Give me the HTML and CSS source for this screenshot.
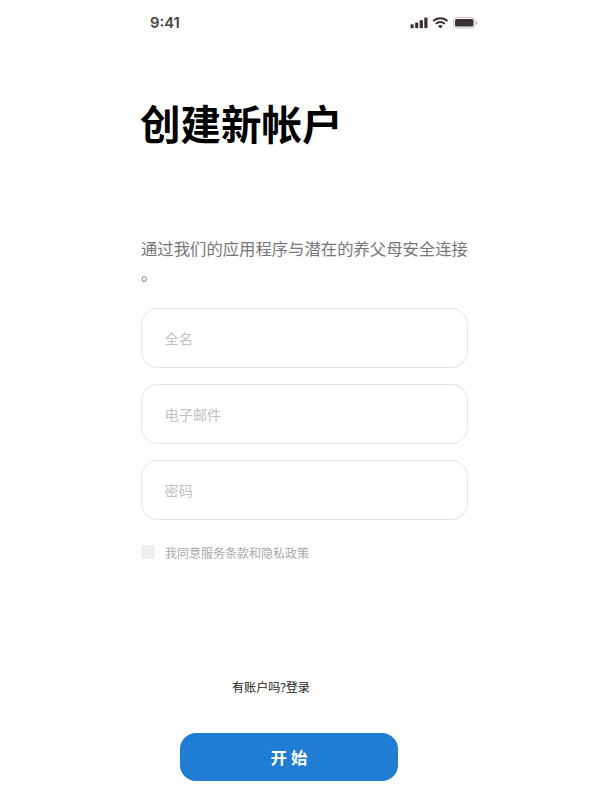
FILE: index.html
```html
<!DOCTYPE html>
<html lang="zh-CN">
<head>
<meta charset="utf-8">
<title>创建新帐户</title>
<link rel="stylesheet" href="styles.css">
</head>
<body>
<main class="screen">
  <header class="status">
    <span class="time">9:41</span>
    <svg class="indicators" width="68" height="14" viewBox="0 0 68 14" fill="#3d3034">
      <rect x="0.5" y="8.2" width="3.2" height="4" rx="1"/>
      <rect x="5.1" y="6.4" width="3.2" height="5.8" rx="1"/>
      <rect x="9.7" y="4" width="3.2" height="8.2" rx="1"/>
      <rect x="14.3" y="1.5" width="3.2" height="10.7" rx="1"/>
      <g fill="none" stroke="#3d3034" stroke-width="2">
        <path d="M23.2 5.1a10.2 10.2 0 0 1 14.2 0"/>
        <path d="M25.8 7.9a6.5 6.5 0 0 1 9 0"/>
      </g>
      <path d="M27.9 10a3.6 3.6 0 0 1 4.8 0L30.3 12.4z"/>
      <rect x="43.5" y="1.5" width="21.5" height="10.5" rx="3" fill="none" stroke="#c4c0c1"/>
      <rect x="45" y="3" width="18.5" height="7.5" rx="1.5"/>
      <path d="M66 5v4c1.3-.7 1.3-3.3 0-4" fill="#a9a4a6"/>
    </svg>
  </header>
  <h1 class="title">创建新帐户</h1>
  <p class="intro">通过我们的应用程序与潜在的养父母安全连接。</p>
  <form class="form">
    <input class="field" type="text" placeholder="全名">
    <input class="field" type="email" placeholder="电子邮件">
    <input class="field" type="password" placeholder="密码">
    <label class="terms"><input class="check" type="checkbox"><span class="terms-text">我同意服务条款和隐私政策</span></label>
    <p class="login">有账户吗?<a class="login-link">登录</a></p>
    <button class="start" type="button">开 始</button>
  </form>
</main>
</body>
</html>
```

FILE: styles.css
```css
* { box-sizing: border-box; }
body {
  margin: 0;
  background: #fff;
  font-family: "Noto Sans", "Noto Sans CJK SC", sans-serif;
}
.screen { width: 327px; height: 812px; margin: 0 auto; }
.status {
  display: flex;
  justify-content: space-between;
  align-items: center;
  height: 46px;
  margin-right: -10px;
  padding-left: 9px;
}
.time { font: 600 14.8px/20px Inter, sans-serif; color: #4a4144; }
.title {
  margin: 49px 0 0 -1px;
  font-size: 40.5px;
  line-height: 60px;
  font-weight: 700;
  color: #000;
  white-space: nowrap;
}
.intro {
  margin: 82px 0 0;
  font-size: 16.35px;
  line-height: 25px;
  color: #777;
  line-break: anywhere;
}
.form { display: flex; flex-direction: column; margin-top: 21px; }
.field {
  height: 60px;
  margin-bottom: 16px;
  padding: 0 22.5px;
  border: 1px solid #e4e4e4;
  border-radius: 16px;
  outline: none;
  background: #fff;
  font: 14.2px "Noto Sans", "Noto Sans CJK SC", sans-serif;
}
.field::placeholder { color: #c0c0c0; }
.terms {
  display: flex;
  align-items: center;
  gap: 10px;
  margin-top: 6px;
  height: 20px;
  font-size: 12px;
  color: #a8a8a8;
}
.terms-text { padding-top: 2px; }
.check {
  appearance: none;
  width: 14px;
  height: 14px;
  margin: 0;
  border-radius: 4px;
  background: #efefef;
}
.login {
  margin: 116px 0 0 91px;
  font-size: 12.1px;
  line-height: 20px;
  color: #222;
}
.login-link { color: #222; }
.start {
  width: 218px;
  height: 48px;
  margin: 35px 0 0 39px;
  padding: 0;
  border: 0;
  border-radius: 16px;
  background: #1f7dd4;
  color: #fff;
  font: 700 16.4px "Noto Sans", "Noto Sans CJK SC", sans-serif;
}
```
